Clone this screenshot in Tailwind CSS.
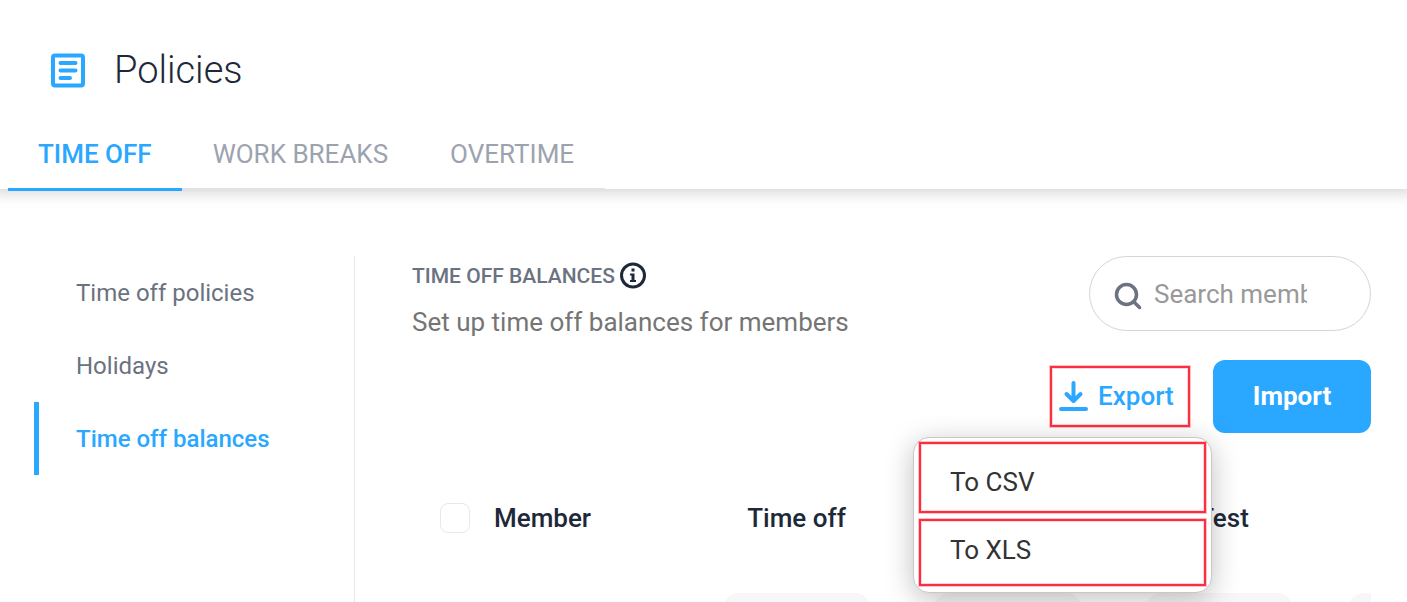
<!DOCTYPE html>
<html lang="en">
<head>
    <meta charset="UTF-8">
    <meta name="viewport" content="width=device-width, initial-scale=1.0">
    <title>Policies | Time off balances</title>
    <script src="https://cdn.jsdelivr.net/npm/@tailwindcss/browser@4"></script>
</head>
<body class="h-screen flex flex-col overflow-hidden bg-white font-[Roboto,sans-serif] text-[26px] leading-8 text-[#1d2838]">
    <header class="relative h-[189px] shrink-0 flex flex-col justify-between bg-white shadow-[0_-4px_14px_8px_rgba(0,0,0,0.17)]">
        <div class="flex items-center gap-7 pl-[50px] pt-[46px]">
            <svg class="w-9 h-9" viewBox="0 0 36 36" fill="none" stroke="#2aa7ff" stroke-width="4" stroke-linecap="round" stroke-linejoin="round" aria-hidden="true">
                <rect x="3" y="3.500" width="30" height="30" rx="2" />
                <path d="M10.500 11h15M10.500 18.500h15M10.500 26h9.500" />
            </svg>
            <h1 class="text-[38px] leading-12 font-light">Policies</h1>
        </div>
        <nav class="flex self-start ml-2 h-[70px] border-b border-[#e2e2e2] text-[#9ca3af]">
            <a href="#" class="h-[72px] px-[30px] pt-[19px] border-b-3 border-[#2aa7ff] font-medium text-[#2aa7ff]">TIME OFF</a>
            <a href="#" class="px-[31px] pt-[19px]">WORK BREAKS</a>
            <a href="#" class="px-[31px] pt-[19px]">OVERTIME</a>
        </nav>
    </header>

    <main class="flex flex-1 min-h-0 overflow-hidden pt-[67px] pr-9 pl-[34px]">
        <aside class="w-[321px] shrink-0 border-r border-[#e5e7eb] text-2xl text-[#6b7280]">
            <a href="#" class="flex items-center h-[73px] pl-[42px]">Time off policies</a>
            <a href="#" class="flex items-center h-[73px] pl-[42px]">Holidays</a>
            <a href="#" class="flex items-center h-[73px] pl-[37px] border-l-5 border-[#2aa7ff] font-medium text-[#2aa7ff]">Time off balances</a>
        </aside>

        <section class="flex-1 min-w-0 ml-[57px]">
            <div class="flex justify-between">
                <div class="pt-1">
                    <h2 class="flex items-center gap-1 text-[21px] leading-8 font-medium text-[#6b7280]">
                        TIME OFF BALANCES
                        <svg class="w-7 h-7" viewBox="0 0 28 28" fill="none" aria-hidden="true">
                            <circle cx="14" cy="13.500" r="11.500" stroke="#1d2838" stroke-width="3" />
                            <path d="M12.500 6.500h3v3h-3zM11 11.500h4.500v6.500H17v2h-6v-2h1.500v-4.500H11z" fill="#1d2838" />
                        </svg>
                    </h2>
                    <p class="mt-3.5 text-[#757575]">Set up time off balances for members</p>
                </div>
                <label class="flex items-center w-[282px] h-[75px] pl-6 rounded-full border border-[#d1d5db]">
                    <svg class="w-7 h-7 mt-1 mr-3" viewBox="0 0 28 28" fill="none" stroke="#6b7280" stroke-width="3.500" stroke-linecap="round" aria-hidden="true">
                        <circle cx="12.500" cy="12.500" r="10" />
                        <path d="M20 20l5.500 5.500" />
                    </svg>
                    <input type="text" aria-label="Search members" placeholder="Search members" class="w-[153px] outline-none placeholder:text-[#999999]">
                </label>
            </div>

            <div class="flex justify-end items-center gap-[23px] mt-[22px]">
                <div class="relative">
                    <button class="flex items-center gap-2.5 w-[140px] h-[61px] pl-[7px] pb-0.5 border-2 border-[#ff2d42] ring-1 ring-[#ff2d42]/30 inset-ring-1 inset-ring-[#ff2d42]/20 font-medium text-[#2aa7ff]">
                        <svg class="w-[29px] h-[31px]" viewBox="0 0 29 31" fill="none" stroke="#2aa7ff" stroke-width="4" stroke-linecap="round" stroke-linejoin="round" aria-hidden="true">
                            <path d="M14.500 3v18M7.500 14l7 7 7-7M2 29h25" />
                        </svg>
                        Export
                    </button>
                    <div class="absolute z-10 top-full -right-[22px] w-[299px] mt-2.5 px-[5px] pt-1 pb-1.5 flex flex-col gap-1.5 rounded-2xl border border-[#c8c8c8] bg-white shadow-[0_6px_28px_rgba(0,0,0,0.25)] text-[#333333]">
                        <button class="h-[71px] pl-[29px] pt-2 text-left border-2 border-[#ff2d42] ring-1 ring-[#ff2d42]/30 inset-ring-1 inset-ring-[#ff2d42]/20">To CSV</button>
                        <button class="h-[67px] pl-[29px] pb-1.5 text-left border-2 border-[#ff2d42] ring-1 ring-[#ff2d42]/30 inset-ring-1 inset-ring-[#ff2d42]/20">To XLS</button>
                    </div>
                </div>
                <button class="w-[158px] h-[73px] pb-0.5 rounded-xl bg-[#2aa7ff] font-bold text-white">Import</button>
            </div>

            <div class="mt-[37px] overflow-hidden">
                <table class="w-[1108px] table-fixed">
                    <thead>
                        <tr class="h-24 font-medium">
                            <th class="w-[279px] pl-7 text-left font-medium">
                                <label class="flex items-center gap-6">
                                    <input type="checkbox" class="appearance-none w-[30px] h-[30px] rounded-lg border border-[#e8e8e8]">
                                    Member
                                </label>
                            </th>
                            <th class="w-[211px] font-medium">Time off</th>
                            <th class="w-[211px]"></th>
                            <th class="w-[211px] pl-2.5 font-medium">Test</th>
                            <th></th>
                        </tr>
                    </thead>
                    <tbody>
                        <tr>
                            <td></td>
                            <td class="pt-[27px] text-center"><input type="text" aria-label="Time off balance" class="w-[148px] h-14 rounded-2xl bg-[#f7f7f9]"></td>
                            <td class="pt-[27px] text-center"><input type="text" aria-label="Balance" class="w-[148px] h-14 rounded-2xl bg-[#f7f7f9]"></td>
                            <td class="pt-[27px] text-center"><input type="text" aria-label="Test balance" class="w-[148px] h-14 rounded-2xl bg-[#f7f7f9]"></td>
                            <td class="pt-[27px] text-center"><input type="text" aria-label="Balance" class="w-[148px] h-14 rounded-2xl bg-[#f7f7f9]"></td>
                        </tr>
                    </tbody>
                </table>
            </div>
        </section>
    </main>
</body>
</html>
